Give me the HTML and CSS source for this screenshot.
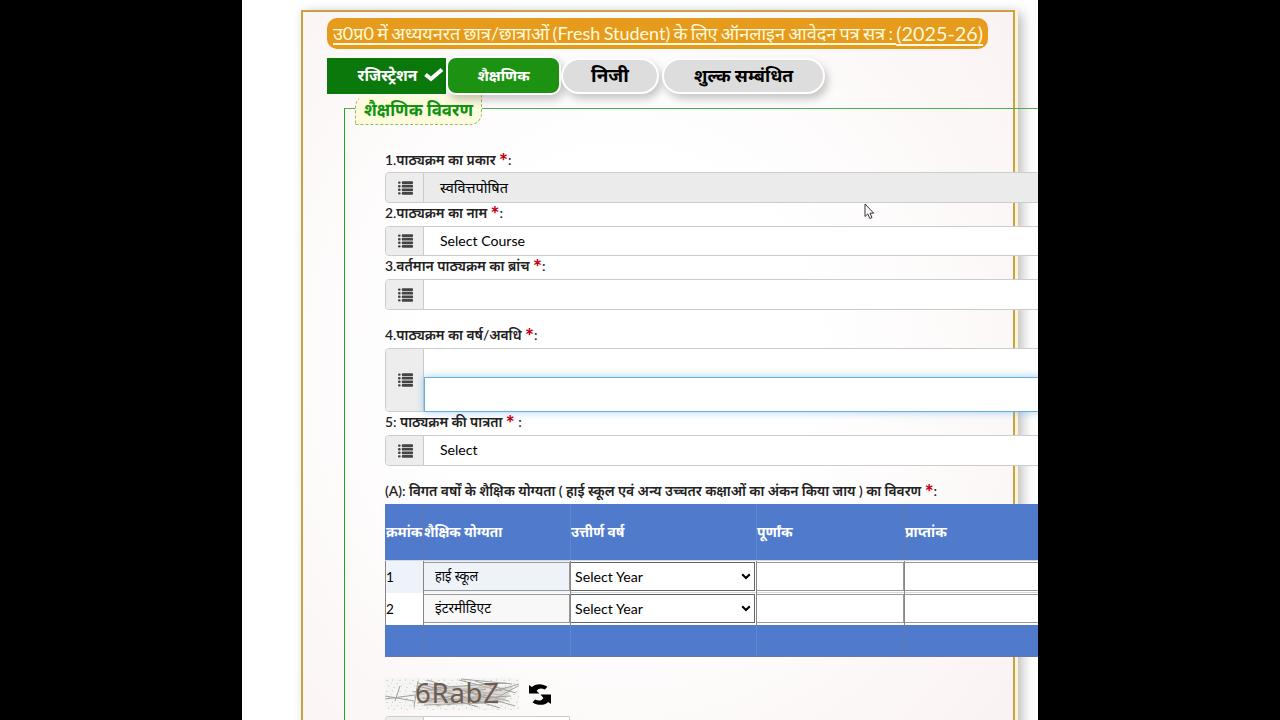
FILE: index.html
```html
<!DOCTYPE html>
<html lang="hi">
<head>
<meta charset="utf-8">
<title>ऑनलाइन आवेदन पत्र</title>
<link rel="stylesheet" href="styles.css">
</head>
<body>
<svg width="0" height="0" class="defs" aria-hidden="true">
  <symbol id="list" viewBox="0 0 15 14"><rect y=".4" width="2.600" height="2.400" rx="1"/><rect y="4" width="2.600" height="2.400" rx="1"/><rect y="7.600" width="2.600" height="2.400" rx="1"/><rect y="11.200" width="2.600" height="2.400" rx="1"/><rect x="3.800" y=".2" width="11.200" height="2.800" rx=".7"/><rect x="3.800" y="3.800" width="11.200" height="2.800" rx=".7"/><rect x="3.800" y="7.400" width="11.200" height="2.800" rx=".7"/><rect x="3.800" y="11" width="11.200" height="2.800" rx=".7"/></symbol>
</svg>
<main class="screen">
  <div class="card">
    <h1 class="title"><span class="t-title">उ0प्र0 में अध्ययनरत छात्र/छात्राओं (Fresh Student) के लिए ऑनलाइन आवेदन पत्र सत्र : </span><span class="t-year">(2025-26)</span></h1>
    <nav class="tabs">
      <div class="tab done"><span>रजिस्ट्रेशन</span><svg width="20" height="15" viewBox="0 0 20 15"><path d="M1.5 6.500 L7 11 L18 1.500" fill="none" stroke="#fff" stroke-width="4"/></svg></div>
      <div class="tab active"><span>शैक्षणिक</span></div>
      <div class="tab personal"><span>निजी</span></div>
      <div class="tab fee"><span>शुल्क सम्बंधित</span></div>
    </nav>
    <section class="fieldset">
      <div class="legend"><span>शैक्षणिक विवरण</span></div>
      <div class="form">
        <div class="label first"><span class="l1">1.पाठ्यक्रम का प्रकार <b>*</b>:</span></div>
        <div class="group disabled"><div class="addon"><svg><use href="#list"/></svg></div><div class="control">स्ववित्तपोषित</div></div>
        <div class="label"><span class="l2">2.पाठ्यक्रम का नाम <b>*</b>:</span></div>
        <div class="group short"><div class="addon"><svg><use href="#list"/></svg></div><div class="control latin">Select Course</div></div>
        <div class="label"><span class="l3">3.वर्तमान पाठ्यक्रम का ब्रांच <b>*</b>:</span></div>
        <div class="group"><div class="addon"><svg><use href="#list"/></svg></div><div class="control"></div></div>
        <div class="label spaced"><span class="l4">4.पाठ्यक्रम का वर्ष/अवधि <b>*</b>:</span></div>
        <div class="group tall"><div class="addon"><svg><use href="#list"/></svg></div><div class="control stack"><div class="focus"></div></div></div>
        <div class="label"><span class="l5">5: पाठ्यक्रम की पात्रता <b>*</b> :</span></div>
        <div class="group"><div class="addon"><svg><use href="#list"/></svg></div><div class="control latin">Select</div></div>
        <div class="label spaced"><span class="l6">(A): विगत वर्षों के शैक्षिक योग्यता ( हाई स्कूल एवं अन्य उच्चतर कक्षाओं का अंकन किया जाय ) का विवरण <b>*</b>:</span></div>
        <div class="table">
          <div class="row head"><div><span>क्रमांक</span></div><div><span class="qual">शैक्षिक योग्यता</span></div><div><span class="qual">उत्तीर्ण वर्ष</span></div><div><span>पूर्णांक</span></div><div><span>प्राप्तांक</span></div></div>
          <div class="row body odd"><div>1</div><div><p class="name"><span class="n1">हाई स्कूल</span></p></div><div><p class="pick">Select Year<svg width="10" height="7"><path d="M1.2 1.2 5 5 8.800 1.200"/></svg></p></div><div><p class="box"></p></div><div><p class="box"></p></div></div>
          <div class="row body"><div>2</div><div><p class="name"><span class="n2">इंटरमीडिएट</span></p></div><div><p class="pick">Select Year<svg width="10" height="7"><path d="M1.2 1.2 5 5 8.800 1.200"/></svg></p></div><div><p class="box"></p></div><div><p class="box"></p></div></div>
          <div class="row foot"><div></div><div></div><div></div><div></div><div></div></div>
        </div>
        <div class="captcha">
          <svg class="noise" width="134" height="32" viewBox="0 0 134 32">
            <defs><pattern id="dots" width="13" height="11" patternUnits="userSpaceOnUse"><path d="M1 2h2v1H1zM7 1h1v2H7zM11 5h2v1h-2zM3 7h1v2H3zM8 9h2v1H8zM6 5h1v1H6z" fill="#dadada"/></pattern></defs>
            <rect width="134" height="32" fill="#f5f5f4"/><rect width="134" height="32" fill="url(#dots)"/>
            <path d="M34 7 128 9 118 25 34 26z" fill="#cfc9c4" opacity=".6"/>
            <g stroke="#a3a19f" stroke-width="1" fill="none"><path d="M0 21 30 17M10 23 15 8M29 29 33 3M28 14 72 9M32 25 101 11M33 5 115 30M42 2 130 28M76 1 127 6M74 2 117 13M47 10 121 5M62 27 134 6M37 20 113 25M59 22 126 18M32 11 93 29M90 3 131 15M0 18 29 23M39 27 98 25M51 6 124 23M108 22 133 8M32 8 84 20"/></g>
            <g stroke="#c9bdb5" stroke-width="1.500"><path d="M34 16 112 8M36 24 120 21M44 6 116 17M52 28 110 13"/></g>
            <text x="30" y="25" class="code" textLength="84">6RabZ</text>
          </svg>
          <svg class="refresh" width="22" height="21" viewBox="0 0 22 21"><path d="M0 1 2.700 3.100C6.500-.6 13.500-.9 18.500 2.800L15.800 5.400C12.500 3.800 9.200 4.200 7.600 7L10.500 9.600H0ZM22 20 19.300 17.900C15.500 21.600 8.500 21.900 3.500 18.200L6.200 15.600C9.500 17.200 12.800 16.800 14.400 14L11.500 10.400H22Z"/></svg>
        </div>
        <div class="group code-entry"><div class="addon"></div><div class="control"></div></div>
      </div>
    </section>
  </div>
  <svg class="cursor" width="11" height="17" viewBox="0 0 11 17"><path d="M1 1v12.500l2.800-2.600 2 4.600 2.200-1-2-4.300h3.700z" fill="#fff" stroke="#333" stroke-width="1"/></svg>
</main>
</body>
</html>
```
FILE: styles.css
```css
* { box-sizing: border-box; }
body { margin: 0; width: 1280px; height: 720px; overflow: hidden; background: #000; font-family: Lato, "Noto Sans", "Noto Sans Devanagari", sans-serif; color: #000; }
.defs { position: absolute; }
.screen { position: relative; margin-left: 242px; width: 796px; height: 720px; padding: 10px 0 0 59px; background: #fff; overflow: hidden; }
.card { width: 714px; height: 760px; border: 2px solid #cba144; padding: 6px 0 0 24px; background: radial-gradient(ellipse at 45% 46%, #fff 35%, #fdfafa 60%, #faf1f1 100%); box-shadow: 3px 0 0 #fbf5d8, 7px 4px 11px 1px rgba(0,0,0,.23), 0 0 10px rgba(0,0,0,.06); }
span { white-space: nowrap; display: inline-block; transform-origin: 0 50%; }
.title { margin: 0; width: 661px; height: 31px; padding-left: 6px; border-radius: 10px; background: #e79b1c; color: #fffadd; font-size: 18px; font-weight: 400; line-height: 30px; white-space: nowrap; display: flex; }
.title span { text-decoration: underline; text-underline-offset: 3px; text-decoration-thickness: 1.500px; white-space: pre; }
.t-title { word-spacing: -1.3px; }
.t-year { font-size: 19.800px; }
.tabs { display: flex; align-items: center; height: 37px; margin-top: 8px; }
.tab { display: flex; align-items: center; justify-content: center; height: 36px; font-weight: 700; border: 2px solid #fff; box-shadow: 3px 5px 9px rgba(0,0,0,.22); }
.tab span { position: relative; top: -1px; }
.done { width: 119px; border: 0; background: #0a780a; color: #fff; font-size: 15.500px; padding-left: 29px; gap: 7px; box-shadow: none; }
.active { width: 115px; height: 39px; border-radius: 10px; background: #1d9212; color: #fff; font-size: 15px; }
.personal { width: 98px; border-radius: 18px; background: #dedddd; font-size: 19px; }
.fee { width: 163px; margin-left: 3px; border-radius: 18px; background: #dedddd; font-size: 18px; }
.fee span { transform: scaleX(.98); transform-origin: 50%; }
.fieldset { width: 760px; height: 700px; margin: 14px 0 0 17px; border-top: 1px solid #4caf50; border-left: 1px solid #22a522; }
.legend { width: 127px; height: 30px; margin: -14px 0 0 10px; padding-left: 8px; border: 1px dashed #9db86c; border-top-color: transparent; border-radius: 12px 0 12px 0; background: #fcfbdc; color: #0f930f; font-size: 18px; font-weight: 700; line-height: 26px; }
.legend span { transform: scaleX(.935); }
.form { padding-left: 40px; }
.label { height: 23px; line-height: 19px; font-size: 13.800px; font-weight: 600; color: #222; }
.label.first { margin-top: 24px; }
.label.spaced { margin-top: 15px; }
.label b { color: #c00016; font-size: 21px; line-height: 1px; vertical-align: -4px; }
.l1 { padding-top: 1px; }
.l3 { transform: scaleX(1.008); }
.group { display: flex; height: 31px; border: 1px solid #ccc; border-radius: 4px; background: #fff; }
.group.short { height: 30px; }
.group.disabled { background: #ebebeb; }
.addon { width: 38px; display: flex; align-items: center; justify-content: center; background: #ededed; border-right: 1px solid #ccc; border-radius: 4px 0 0 4px; padding-left: 2px; }
.addon svg { width: 15px; height: 14px; fill: #444; }
.control { flex: 1; padding-left: 16px; font-size: 14.500px; line-height: 29px; }
.latin { font-size: 14.100px; line-height: 28px; }
.tall { height: 64px; }
.stack { padding: 28px 0 0; }
.focus { height: 35px; border: 1px solid #66afe0; box-shadow: 0 0 8px rgba(102,175,233,.6); background: #fff; }
.table { width: 690px; background: #fff; }
.row { display: grid; grid-template-columns: 38px 147px 186px 148px 171px; }
.row > div { border-left: 1px solid #888; }
.head { height: 56px; background: #507bcc; color: #fff; font-size: 14px; font-weight: 700; line-height: 56px; }
.row.head > div, .row.foot > div { border-color: #6578a8; }
.row.head > div:nth-child(3), .row.foot > div:nth-child(3), .row.head > div:nth-child(4), .row.foot > div:nth-child(4) { border-color: #6286cf; }
.row.head > div:first-child, .row.foot > div:first-child { border-color: #507bcc; }
.qual { transform: scaleX(.98); }
.foot { height: 32px; background: #507bcc; border-bottom: 1px solid #6578a8; }
.body { height: 33px; font-size: 13.500px; line-height: 32px; border-top: 1px solid #d5d9df; }
.body.odd { height: 32px; }
.odd > div:nth-child(-n+2) { background: #eef3fa; }
.body p { margin: 1px 0 0; height: 29px; line-height: 26px; border: 1px solid #999; border-left: 0; font-size: 14.200px; }
.body .name { padding-left: 11px; background: #f8f8f9; }
.n1 { transform: scaleX(.9); }
.n2 { transform: scaleX(.96); }
.odd .name { background: #eef3fa; }
.body .pick { display: flex; align-items: center; justify-content: space-between; padding: 0 3px 0 4px; margin-right: 1px; border-color: #666; border-right: 1px solid #666; }
.pick svg { fill: none; stroke: #000; stroke-width: 2; }
.captcha { display: flex; align-items: center; height: 32px; margin-top: 21px; gap: 10px; }
.noise { overflow: visible; }
.code { font-family: "Noto Sans", "DejaVu Sans", sans-serif; font-size: 27.500px; fill: #6b5d53; }
.code-entry { width: 185px; margin-top: 6px; border-radius: 4px 0 0 0; }
.cursor { position: absolute; left: 622px; top: 203px; }
```
